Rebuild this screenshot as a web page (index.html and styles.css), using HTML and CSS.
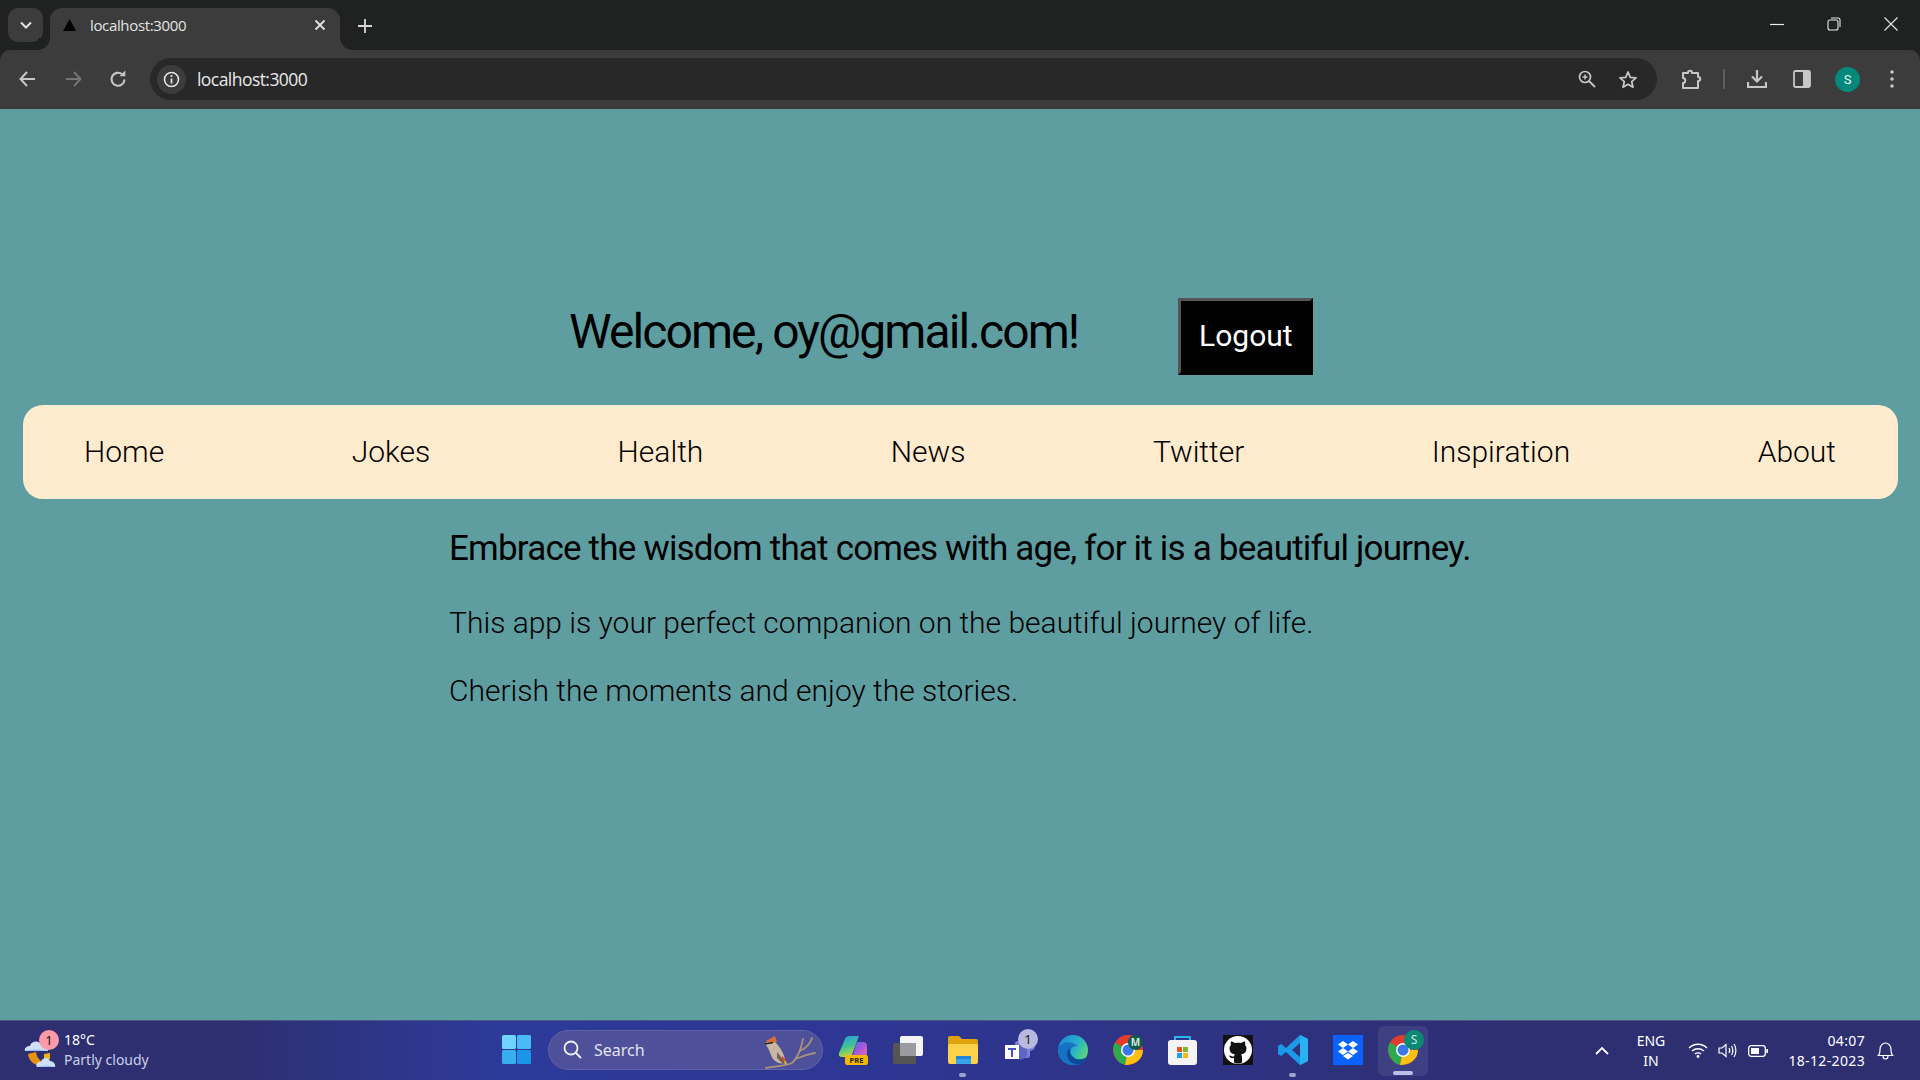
FILE: index.html
```html
<!DOCTYPE html>
<html lang="en">
<head>
<meta charset="utf-8">
<title>localhost:3000</title>
<link rel="stylesheet" href="styles.css">
</head>
<body>
<header class="chrome">
  <div class="tabstrip">
    <div class="tabsearch"><svg width="14" height="10" viewBox="0 0 14 10"><path d="M2 2.5 7 7.5 12 2.5" fill="none" stroke="#e3e3e3" stroke-width="2"/></svg></div>
    <div class="tab">
      <svg class="favicon" width="14" height="13" viewBox="0 0 14 13"><path d="M6.5 0 13 12H0Z" fill="#000"/></svg>
      <span class="tabtitle">localhost:3000</span>
      <svg class="tabclose" width="12" height="12" viewBox="0 0 12 12"><path d="M1.5 1.5 10.500 10.500M10.500 1.500 1.500 10.500" stroke="#e3e3e3" stroke-width="1.800"/></svg>
    </div>
    <svg class="newtab" width="14" height="14" viewBox="0 0 14 14"><path d="M7 0V14M0 7H14" stroke="#d8d8d8" stroke-width="1.800"/></svg>
    <div class="winctl">
      <svg width="14" height="14" viewBox="0 0 14 14"><path d="M0 7.500H14" stroke="#e8e8e8" stroke-width="1.200"/></svg>
      <svg width="14" height="14" viewBox="0 0 14 14"><rect x="1" y="3" width="10" height="10" rx="2" fill="none" stroke="#e8e8e8" stroke-width="1.100"/><path d="M4 1H11a2 2 0 0 1 2 2V10" fill="none" stroke="#e8e8e8" stroke-width="1.100"/></svg>
      <svg width="14" height="14" viewBox="0 0 14 14"><path d="M.5.500 13.500 13.500M13.500.500.500 13.500" stroke="#e8e8e8" stroke-width="1.100"/></svg>
    </div>
  </div>
  <div class="toolbar">
    <div class="navbtns">
      <svg width="18" height="16" viewBox="0 0 18 16"><path d="M8 1 1.500 8 8 15M2 8H16" fill="none" stroke="#c7c7c7" stroke-width="2"/></svg>
      <svg width="18" height="16" viewBox="0 0 18 16"><path d="M10 1 16.500 8 10 15M16 8H2" fill="none" stroke="#757575" stroke-width="2"/></svg>
      <svg width="18" height="18" viewBox="0 0 18 18"><path d="M15.500 9.500A6.500 6.500 0 1 1 13.200 4.300" fill="none" stroke="#c7c7c7" stroke-width="2.100"/><path d="M10.500 6.300H16.300V.500Z" fill="#c7c7c7"/></svg>
    </div>
    <div class="omnibox">
      <div class="siteinfo"><svg width="17" height="17" viewBox="0 0 17 17"><circle cx="8.500" cy="8.500" r="7" fill="none" stroke="#e3e3e3" stroke-width="1.600"/><path d="M8.500 7.500V12.500" stroke="#e3e3e3" stroke-width="1.800"/><circle cx="8.500" cy="5" r="1.100" fill="#e3e3e3"/></svg></div>
      <span class="url">localhost:3000</span>
      <div class="omniicons">
        <svg width="18" height="18" viewBox="0 0 18 18"><circle cx="7" cy="7" r="5.500" fill="none" stroke="#c7c7c7" stroke-width="1.700"/><path d="M11 11 17 17" stroke="#c7c7c7" stroke-width="1.800"/><path d="M4.500 7H9.500M7 4.500V9.500" stroke="#c7c7c7" stroke-width="1.500"/></svg>
        <svg width="20" height="19" viewBox="0 0 20 19"><path d="M10 2 12.300 7.300 18 7.800 13.700 11.600 15 17.200 10 14.300 5 17.200 6.300 11.600 2 7.800 7.700 7.300Z" fill="none" stroke="#c7c7c7" stroke-width="1.800" stroke-linejoin="round"/></svg>
      </div>
    </div>
    <div class="tools">
      <svg class="tool-ext" width="21" height="21" viewBox="0 0 21 21"><path d="M2 4H7C7 1 11 1 11 4H17V8C20 8 20 12 17 12V19H2V14C5 14 5 9 2 9Z" fill="none" stroke="#c7c7c7" stroke-width="2" stroke-linejoin="round"/></svg>
      <span class="tool-sep"></span>
      <svg class="tool-dl" width="20" height="20" viewBox="0 0 20 20"><path d="M10 1V12M5 7.500 10 12.500 15 7.500" fill="none" stroke="#c7c7c7" stroke-width="2.200"/><path d="M1 13V18H19V13" fill="none" stroke="#c7c7c7" stroke-width="2.200"/></svg>
      <svg class="tool-side" width="18" height="18" viewBox="0 0 18 18"><rect x="1" y="1" width="16" height="16" rx="1.500" fill="none" stroke="#c7c7c7" stroke-width="1.800"/><rect x="10" y="1" width="7" height="16" fill="#c7c7c7"/></svg>
      <span class="avatar">S</span>
      <svg class="tool-menu" width="4" height="18" viewBox="0 0 4 18"><circle cx="2" cy="2" r="1.800" fill="#c7c7c7"/><circle cx="2" cy="9" r="1.800" fill="#c7c7c7"/><circle cx="2" cy="16" r="1.800" fill="#c7c7c7"/></svg>
    </div>
  </div>
</header>

<main class="page">
  <div class="welcome">
    <h1 class="welcome-title">Welcome, oy@gmail.com!</h1>
    <button class="logout" type="button">Logout</button>
  </div>
  <nav class="nav">
    <a>Home</a><a>Jokes</a><a>Health</a><a>News</a><a>Twitter</a><a>Inspiration</a><a>About</a>
  </nav>
  <section class="content">
    <h2 class="lead">Embrace the wisdom that comes with age, for it is a beautiful journey.</h2>
    <p class="para">This app is your perfect companion on the beautiful journey of life.</p>
    <p class="para">Cherish the moments and enjoy the stories.</p>
  </section>
</main>

<footer class="taskbar">
  <div class="weather">
    <div class="weather-icon">
      <svg width="32" height="34" viewBox="0 0 32 34">
        <path d="M4 17C5 27 17 33 27 25 19 27 13 23 12 15Z" fill="#e8920f"/>
        <path d="M20 17 26 16 26 22 20 22Z" fill="#f0b020"/>
        <path d="M1 14C0 11 3 9 6 9 7 4 14 3 17 7 21 7 24 10 24 14Z" fill="#cfe0f5"/>
        <path d="M1 14C5 12 18 12 24 14Z" fill="#9fc0ea"/>
        <path d="M13 30C11 27 14 24 17 25 18 20 25 20 26 24 29 24 32 27 31 30Z" fill="#cfe0f5"/>
        <path d="M13 30C18 28 26 28 31 30Z" fill="#9fc0ea"/>
      </svg>
      <span class="weather-badge">1</span>
    </div>
    <div class="weather-text">
      <span class="temp">18°C</span>
      <span class="cond">Partly cloudy</span>
    </div>
  </div>

  <div class="centerbar">
    <div class="slot">
      <svg width="29" height="29" viewBox="0 0 29 29"><rect width="14" height="14" rx="1.500" fill="#6fd3fb"/><rect x="15" width="14" height="14" rx="1.500" fill="#49bdf3"/><rect y="15" width="14" height="14" rx="1.500" fill="#37aeee"/><rect x="15" y="15" width="14" height="14" rx="1.500" fill="#1b95e6"/></svg>
    </div>
    <div class="search">
      <svg width="19" height="19" viewBox="0 0 19 19"><circle cx="8" cy="8" r="6.500" fill="none" stroke="#f0f0f5" stroke-width="1.800"/><path d="M12.500 12.500 18 18" stroke="#f0f0f5" stroke-width="1.800"/></svg>
      <span class="search-text">Search</span>
      <svg class="bird" width="54" height="34" viewBox="0 0 54 34">
        <path d="M4 33C14 31 24 31 30 28 36 23 39 14 41 4M33 24C40 21 47 19 53 18M38 16C42 14 48 10 50 3" fill="none" stroke="#a8917c" stroke-width="1.800" stroke-linecap="round"/>
        <path d="M3 9C5 5 12 4 14 8 18 12 24 21 23 28 17 30 11 26 9 20 7 15 6 12 3 9Z" fill="#c9b5a4"/>
        <path d="M4 6 13 1 15 7 8 8Z" fill="#d9703a"/>
        <path d="M3 9 11 7.500" stroke="#222" stroke-width="1.600"/>
        <path d="M15 17 24 28 21 29 15 23Z" fill="#6e6458"/>
        <path d="M20 21 24 25 23 28 20 25Z" fill="#d04a30"/>
        <path d="M22 25 25 28 23 30Z" fill="#e8c830"/>
      </svg>
    </div>
    <div class="slot">
      <svg width="30" height="30" viewBox="0 0 30 30">
        <defs>
          <linearGradient id="copa" x1="0" y1="0" x2=".3" y2="1"><stop offset="0" stop-color="#2f9be8"/><stop offset=".55" stop-color="#3cc09a"/><stop offset="1" stop-color="#b8d840"/></linearGradient>
          <linearGradient id="copb" x1="0" y1="0" x2="1" y2="1"><stop offset="0" stop-color="#3f6fe8"/><stop offset=".5" stop-color="#a858d8"/><stop offset="1" stop-color="#e86ab8"/></linearGradient>
        </defs>
        <path d="M1 18 7 4Q8 1 12 1H21L13 22H4Q0 22 1 18Z" fill="url(#copa)"/>
        <path d="M19 7H25Q29 7 29 11V18Q29 22 25 22H14Z" fill="url(#copb)"/>
        <rect x="7" y="20" width="23" height="10" rx="2" fill="#f5b800"/>
        <text class="pre" x="18.500" y="28.300">PRE</text>
      </svg>
    </div>
    <div class="slot">
      <svg width="30" height="28" viewBox="0 0 30 28"><rect y="7" width="23" height="21" rx="2" fill="#555"/><rect x="7" width="23" height="20" rx="2" fill="#f4f4f6"/><rect x="7" y="7" width="16" height="13" fill="#9a9aa0"/></svg>
    </div>
    <div class="slot slot-open">
      <svg width="30" height="28" viewBox="0 0 30 28"><path d="M0 2a2 2 0 0 1 2-2H11L14 3H28a2 2 0 0 1 2 2V10H0Z" fill="#e0a310"/><rect y="8" width="30" height="20" rx="2" fill="#fcd24a"/><rect x="8" y="20" width="15" height="3" fill="#2186d4"/><rect x="8" y="23" width="15" height="5" fill="#38a5ea"/></svg>
    </div>
    <div class="slot">
      <svg width="34" height="34" viewBox="0 0 34 34"><circle cx="29" cy="13" r="5" fill="#7b80d8"/><rect x="14" y="8" width="15" height="17" rx="3" fill="#7b80d8"/><path d="M14 12H26V22A7 7 0 0 1 14 24Z" fill="#5f64c4"/><rect x="4" y="12" width="14" height="14" fill="#fff"/><path d="M7 15H15V17H12V24H10V17H7Z" fill="#4b53bc"/></svg>
      <span class="count-badge">1</span>
    </div>
    <div class="slot">
      <svg width="30" height="30" viewBox="0 0 30 30"><defs><linearGradient id="edgeg" x1="0" y1=".2" x2="1" y2=".7"><stop offset="0" stop-color="#1a8ed8"/><stop offset=".55" stop-color="#28b0c8"/><stop offset="1" stop-color="#62dc70"/></linearGradient></defs><circle cx="15" cy="15" r="15" fill="url(#edgeg)"/><path d="M0 14C0 25 10 32 19 30 24 29 27 26 29 22 25 25 18 26 14 21 10 16 14 10 20 11 14 5 2 6 0 14Z" fill="#1572c4"/><path d="M9 19C9 26 15 30 22 29 25 28 27 26 29 22 25 25 18 26 14 21 12 19 11 16 12 13 10 14 9 16 9 19Z" fill="#0c4a94"/></svg>
    </div>
    <div class="slot">
      <svg class="gchrome" width="30" height="30" viewBox="0 0 30 30"><use href="#chrome-logo"/><circle cx="22.500" cy="7.500" r="7.500" fill="#0d5c4a"/><text class="mini" x="22.500" y="11">M</text></svg>
    </div>
    <div class="slot">
      <svg width="29" height="30" viewBox="0 0 29 30"><path d="M7 5V2H22V5" fill="none" stroke="#2ab6f0" stroke-width="2"/><rect y="5" width="29" height="25" rx="3" fill="#f4f4f6"/><rect x="9" y="12" width="5" height="5" fill="#e8532a"/><rect x="15" y="12" width="5" height="5" fill="#7cb82a"/><rect x="9" y="18" width="5" height="5" fill="#1aa2e8"/><rect x="15" y="18" width="5" height="5" fill="#fbb80c"/></svg>
    </div>
    <div class="slot">
      <svg width="30" height="30" viewBox="0 0 30 30"><rect width="30" height="30" fill="#111"/><circle cx="15" cy="15" r="14" fill="#fff"/><path d="M11 27V23C8 23.500 6.500 22.500 6 20.500 8 20.500 9 22 11 21.500 11 20.500 11.500 20 12 19.500 8.500 19 6.500 17 6.500 13.500 6.500 12 7 11 8 10 7.500 8.500 7.700 7.500 8.200 6.500 9.500 6.500 10.700 7.200 11.700 8 13.500 7.500 16.500 7.500 18.300 8 19.300 7.200 20.500 6.500 21.800 6.500 22.300 7.500 22.500 8.500 22 10 23 11 23.500 12 23.500 13.500 23.500 17 21.500 19 18 19.500 18.700 20.200 19 21 19 22V27C19 29 11 29 11 27Z" fill="#111"/></svg>
    </div>
    <div class="slot slot-open">
      <svg width="30" height="30" viewBox="0 0 30 30"><path d="M22 0 30 4V26L22 30 8 17 3 21 0 19V11L3 9 8 13ZM22 8 14 15 22 22Z" fill="#1a9be8" fill-rule="evenodd"/><path d="M22 0 30 4V26L22 30Z" fill="#2bb0f2"/></svg>
    </div>
    <div class="slot">
      <svg width="30" height="30" viewBox="0 0 30 30"><rect width="30" height="30" fill="#0b62fe"/><path d="M10 6 15 9.500 10 13 5 9.500ZM20 6 25 9.500 20 13 15 9.500ZM10 13 15 16.500 10 20 5 16.500ZM20 13 25 16.500 20 20 15 16.500ZM10 21 15 18 20 21 15 24.500Z" fill="#fff"/></svg>
    </div>
    <div class="slot-active">
      <svg width="30" height="30" viewBox="0 0 30 30"><symbol id="chrome-logo" viewBox="0 0 30 30"><circle cx="15" cy="15" r="15" fill="#e33b2e"/><path d="M15 15 2 7.500C-2 14 1 27 12 30Z" fill="#2da94f"/><path d="M15 15H30C30 24 22 30 12 30Z" fill="#fbc116"/><circle cx="15" cy="15" r="7" fill="#fff"/><circle cx="15" cy="15" r="5.500" fill="#3b78e7"/></symbol><use href="#chrome-logo"/></svg>
      <span class="s-badge">S</span>
      <span class="active-bar"></span>
    </div>
  </div>

  <div class="tray">
    <svg class="tray-chev" width="14" height="9" viewBox="0 0 14 9"><path d="M1 8 7 2 13 8" fill="none" stroke="#fff" stroke-width="1.800"/></svg>
    <div class="lang"><span>ENG</span><span>IN</span></div>
    <svg class="tray-wifi" width="20" height="15" viewBox="0 0 20 15"><path d="M1 5C6 0 14 0 19 5M4 8C7.500 5 12.500 5 16 8M7 11C8.500 9.500 11.500 9.500 13 11" fill="none" stroke="#fff" stroke-width="1.400"/><circle cx="10" cy="13.500" r="1.400" fill="#fff"/></svg>
    <svg class="tray-vol" width="20" height="17" viewBox="0 0 20 17"><path d="M1 6V11H4L8 14.500V2.500L4 6Z" fill="none" stroke="#fff" stroke-width="1.200"/><path d="M11 6C12 7.500 12 9.500 11 11M13.500 4C15 6.500 15 10.500 13.500 13M16 2C18.500 5.500 18.500 11.500 16 15" fill="none" stroke="#fff" stroke-width="1.200"/></svg>
    <svg class="tray-bat" width="20" height="12" viewBox="0 0 20 12"><rect x=".7" y=".7" width="16.600" height="10.600" rx="2.500" fill="none" stroke="#fff" stroke-width="1.300"/><rect x="3" y="3" width="8" height="6" fill="#fff"/><rect x="18.300" y="4" width="1.700" height="4" fill="#fff"/></svg>
    <div class="clock"><span>04:07</span><span>18-12-2023</span></div>
    <svg class="tray-bell" width="17" height="18" viewBox="0 0 17 18"><path d="M1 13.500C3 12 3 10 3 7.500 3 4 5.500 1 8.500 1S14 4 14 7.500C14 10 14 12 16 13.500ZM6 14C6 18 11 18 11 14" fill="none" stroke="#fff" stroke-width="1.200" stroke-linejoin="round"/></svg>
  </div>
</footer>
</body>
</html>
```
FILE: styles.css
```css
* { box-sizing: border-box; }
html, body { height: 100%; }
body {
  margin: 0;
  height: 1080px;
  overflow: hidden;
  display: flex;
  flex-direction: column;
  background: #5f9ea0;
  font-family: Roboto, sans-serif;
}
svg { display: block; flex: none; }

/* Browser chrome */
.chrome { flex: none; height: 109px; background: #202222; display: flex; flex-direction: column; }
.tabstrip { height: 50px; display: flex; align-items: flex-start; padding: 8px 0 0 8px; }
.tabsearch { width: 35px; height: 34px; background: #3c3c3c; border-radius: 10px; display: flex; align-items: center; justify-content: center; }
.tab {
  position: relative;
  width: 290px; height: 42px; margin-left: 7px;
  background: #3c3c3c; border-radius: 12px 12px 0 0;
  display: flex; align-items: center; padding: 0 14px 8px 13px;
  color: #e3e3e3; font: 400 15px "Open Sans", sans-serif;
}
.tab::before, .tab::after {
  content: ""; position: absolute; bottom: 0; width: 12px; height: 12px;
  background: radial-gradient(circle at 0 0, #202222 11.500px, #3c3c3c 12px);
}
.tab::before { left: -12px; }
.tab::after { right: -12px; transform: scaleX(-1); }
.favicon { margin-right: 13px; }
.tabtitle { flex: 1; letter-spacing: -.35px; }
.newtab { margin: 11px 0 0 18px; }
.winctl { margin-left: auto; display: flex; gap: 43px; padding: 9px 22px 0 0; }
.winctl svg { width: 14px; }

.toolbar { height: 59px; background: #3c3c3c; border-radius: 10px 10px 0 0; display: flex; align-items: center; padding: 0 0 1px 19px; }
.navbtns { display: flex; gap: 27px; align-items: center; width: 131px; }
.omnibox { width: 1507px; height: 42px; background: #282828; border-radius: 21px; display: flex; align-items: center; padding: 0 19px 0 7px; color: #e8e8e8; }
.siteinfo { width: 29px; height: 29px; border-radius: 50%; background: #3c3c3c; display: flex; align-items: center; justify-content: center; }
.url { margin-left: 11px; flex: 1; font: 400 17.500px "Open Sans", sans-serif; letter-spacing: -.55px; }
.omniicons { display: flex; gap: 22px; align-items: center; }
.tools { display: flex; align-items: center; padding-left: 24px; }
.tool-sep { width: 2px; height: 20px; background: #5c5c5c; margin: 0 22px 0 21px; }
.tool-dl { margin-right: 26px; }
.avatar { width: 25px; height: 25px; margin-left: 24px; border-radius: 50%; background: #00897b; color: #e8f5f3; font: 400 13px Roboto, sans-serif; display: flex; align-items: center; justify-content: center; }
.tool-menu { margin-left: 30px; }

/* Page */
.page { flex: 1; min-height: 0; padding-top: 189px; }
.welcome { display: flex; align-items: flex-start; height: 107px; padding-left: 569px; gap: 100px; }
.welcome-title { margin: 0; font-weight: 400; font-size: 48px; line-height: 67px; letter-spacing: -1.91px; color: #000; }
.logout { width: 135px; height: 77px; padding: 0 0 2px; background: #000; color: #fff; border: 3px outset #555; font: 400 30px Roboto, sans-serif; cursor: pointer; }
.nav { margin: 0 22px 0 23px; height: 94px; background: #ffebcd; border-radius: 20px; display: flex; align-items: center; justify-content: space-between; padding: 0 62px 2px 61px; }
.nav a { font-weight: 300; font-size: 30px; color: #000; }
.content { padding: 26px 0 0 449px; }
.lead { margin: 0 0 31px; font-weight: 400; font-size: 35px; line-height: 48px; letter-spacing: -.8px; color: #000; }
.para { margin: 0 0 31px; font-weight: 300; font-size: 30px; line-height: 37px; color: #000; }

/* Taskbar */
.taskbar {
  flex: none; height: 60px; position: relative; display: flex; align-items: center;
  border-top: 1px solid #4a5a85;
  background: linear-gradient(90deg, #2d2f70 0%, #2d2f70 12%, #2d3a99 26%, #2d3693 45%, #2e3384 62%, #2d2f72 78%, #2d2f70 100%);
  color: #fff;
  font-family: "Noto Sans", sans-serif;
}
.weather { width: 489px; display: flex; align-items: center; padding-left: 24px; height: 100%; }
.weather-icon { position: relative; width: 40px; height: 44px; padding-top: 8px; }
.weather-badge { position: absolute; left: 15px; top: 1px; width: 20px; height: 20px; border-radius: 50%; background: #ff9aa8; color: #201010; font-size: 13px; display: flex; align-items: center; justify-content: center; }
.weather-text { display: flex; flex-direction: column; font-size: 14px; line-height: 20px; padding-bottom: 1px; }
.cond { color: #ccd0ea; }
.centerbar { display: flex; align-items: center; height: 100%; }
.slot { position: relative; width: 55px; height: 100%; display: flex; align-items: center; justify-content: center; padding-bottom: 2px; }
.slot-open::after { content: ""; position: absolute; bottom: 3px; left: 24px; width: 7px; height: 4px; border-radius: 2px; background: #9ea3c8; }
.search { width: 275px; height: 40px; margin: 0 2px 2px 4px; display: flex; align-items: center; padding-left: 14px; border-radius: 20px; background: #4e5199; border: 1px solid #5f63a8; position: relative; }
.search-text { margin-left: 12px; font-size: 16px; color: #e2e3f0; }
.bird { position: absolute; right: 6px; bottom: 0; }
.pre { font: 700 7.500px "Noto Sans", sans-serif; text-anchor: middle; fill: #222; }
.mini { font: 700 10px "Noto Sans", sans-serif; text-anchor: middle; fill: #d8e8e0; }
.count-badge { position: absolute; right: 7px; top: 8px; width: 20px; height: 20px; border-radius: 50%; background: #b9b9e0; color: #222; font-size: 13px; display: flex; align-items: center; justify-content: center; }
.slot-active { position: relative; width: 50px; height: 50px; margin-left: 3px; display: flex; align-items: center; justify-content: center; background: #3d4082; border-radius: 6px; padding-bottom: 2px; }
.s-badge { position: absolute; right: 4px; top: 4px; width: 20px; height: 20px; border-radius: 50%; background: #0a8a72; color: #cfe8e2; font-size: 12px; display: flex; align-items: center; justify-content: center; }
.active-bar { position: absolute; bottom: 1px; left: 15px; width: 20px; height: 4px; border-radius: 2px; background: #bcc0e8; }
.tray { margin-left: auto; height: 100%; display: flex; align-items: center; padding-right: 26px; }
.tray-chev { margin-right: 24px; }
.lang { display: flex; flex-direction: column; align-items: center; font-size: 14px; line-height: 20px; width: 36px; margin-right: 19px; }
.tray-wifi { margin-right: 10px; }
.tray-vol { margin-right: 10px; }
.tray-bat { margin-right: 13px; }
.clock { display: flex; flex-direction: column; align-items: flex-end; font-size: 14px; line-height: 20px; letter-spacing: .35px; width: 84px; margin-right: 12px; }
```
